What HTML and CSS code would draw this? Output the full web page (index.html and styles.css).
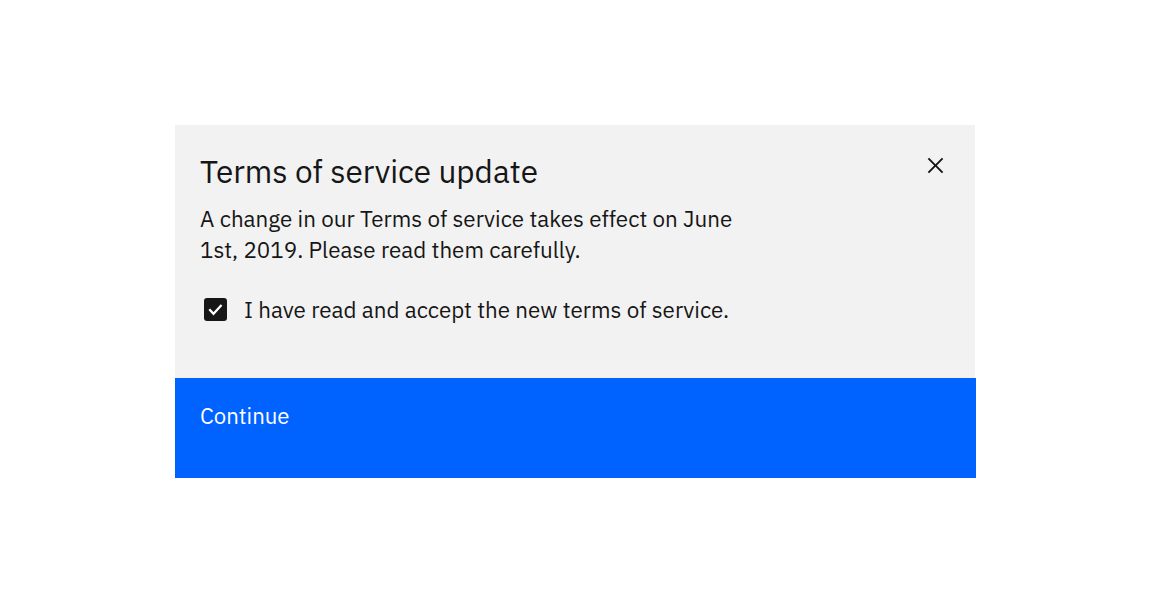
FILE: index.html
```html
<!DOCTYPE html>
<html lang="en">
<head>
<meta charset="utf-8">
<title>Terms of service update</title>
<link rel="stylesheet" href="styles.css">
</head>
<body>
<div class="modal">
  <div class="modal-body">
    <div class="header">
      <h2 class="title">Terms of service update</h2>
      <button class="close" aria-label="Close">
        <svg width="31" height="31" viewBox="0 0 32 32"><path d="M24 9.4L22.6 8 16 14.6 9.4 8 8 9.4 14.6 16 8 22.6 9.4 24 16 17.4 22.6 24 24 22.6 17.4 16 24 9.4z" fill="#161616"/></svg>
      </button>
    </div>
    <p class="desc">A change in our Terms of service takes effect on June<br>1st, 2019. Please read them carefully.</p>
    <label class="check">
      <span class="box"><svg width="23" height="23" viewBox="0 0 23 23"><polyline points="6,12 9.5,15.8 16.8,7.8" fill="none" stroke="#fff" stroke-width="2.2" stroke-linecap="square"/></svg></span>
      <span class="label-text">I have read and accept the new terms of service.</span>
    </label>
  </div>
  <button class="primary">Continue</button>
</div>
</body>
</html>
```

FILE: styles.css
```css
html, body {
  margin: 0;
  padding: 0;
  background: #ffffff;
}
body {
  font-family: "IBM Plex Sans", "Noto Sans", "Liberation Sans", sans-serif;
  color: #161616;
}
.modal {
  margin: 125px 0 0 175px;
  width: 800px;
  display: flex;
  flex-direction: column;
}
.modal-body {
  background: #f2f2f2;
  height: 253px;
  box-sizing: border-box;
  padding: 0 24px 0 25px;
  display: flex;
  flex-direction: column;
}
.header {
  display: flex;
  justify-content: space-between;
  align-items: flex-start;
}
.title {
  margin: 27px 0 0 0;
  font-size: 31.5px;
  line-height: 40px;
  font-weight: 400;
  letter-spacing: 0;
}
.close {
  margin-top: 25px;
  width: 31px;
  height: 31px;
  padding: 0;
  border: 0;
  background: transparent;
  display: flex;
}
.desc {
  margin: 11px 0 0 0;
  font-size: 22.4px;
  line-height: 31px;
}
.check {
  margin-top: 29px;
  display: flex;
  align-items: center;
  gap: 17px;
  font-size: 22.4px;
  line-height: 31px;
}
.box {
  margin-left: 4px;
  margin-top: -1px;
  width: 23px;
  height: 23px;
  background: #161616;
  border-radius: 3px;
  display: flex;
  flex: none;
}
.primary {
  width: 801px;
  height: 100px;
  border: 0;
  margin: 0;
  background: #0062ff;
  color: #ffffff;
  font-family: inherit;
  font-size: 22.2px;
  line-height: 28px;
  text-align: left;
  padding: 24px 25px 0 25px;
  display: flex;
  align-items: flex-start;
}
```
